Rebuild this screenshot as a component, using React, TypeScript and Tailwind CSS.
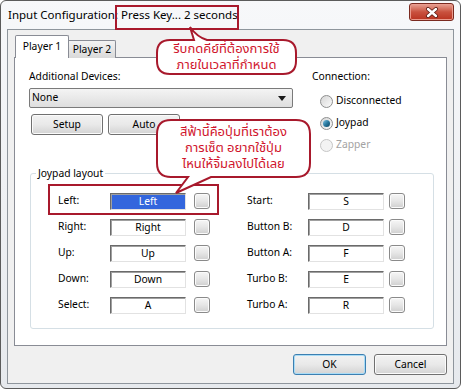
import React from 'react';

const ui = { fontFamily: '"Noto Sans", "Liberation Sans", sans-serif' };
const thai = { fontFamily: 'Tahoma, "Noto Sans Thai", "Noto Sans Thai UI", Loma, Garuda, "DejaVu Sans", sans-serif' };

const rowsLeft = [
  ['Left:', 'Left'],
  ['Right:', 'Right'],
  ['Up:', 'Up'],
  ['Down:', 'Down'],
  ['Select:', 'A'],
];
const rowsRight = [
  ['Start:', 'S'],
  ['Button B:', 'D'],
  ['Button A:', 'F'],
  ['Turbo B:', 'E'],
  ['Turbo A:', 'R'],
];

const SmallButton = () => (
  <div className="w-[16px] h-[16px] rounded-[3px] border border-[#8a8a8a] bg-gradient-to-b from-[#f6f6f6] via-[#e6e6e6] to-[#cfcfcf] shadow-[inset_0_0_0_1px_#fbfbfb]" />
);

const KeyBox = ({ value, active }: { value: string; active?: boolean }) => (
  <div
    className={`w-[76px] h-[17px] flex items-center justify-center border-t border-l border-t-[#6a6a6a] border-l-[#6a6a6a] border-r border-b border-r-[#e2e2e2] border-b-[#e2e2e2] shadow-[inset_1px_1px_0_#a0a0a0] leading-none ${
      active ? 'bg-[#3366dd] text-white' : 'bg-white text-black'
    }`}
  >
    {value}
  </div>
);

const WinButton = ({ label, w, primary }: { label: string; w: string; primary?: boolean }) => (
  <div
    className={`${w} h-[21px] flex items-center justify-center rounded-[3px] border bg-gradient-to-b from-[#f2f2f2] via-[#e9e9e9] to-[#d3d3d3] ${
      primary
        ? 'border-[#3c7fb1] shadow-[inset_0_0_0_1px_#a9dcf6]'
        : 'border-[#707070] shadow-[inset_0_0_0_1px_#fbfbfb]'
    }`}
  >
    {label}
  </div>
);

const Radio = ({ label, checked, disabled }: { label: string; checked?: boolean; disabled?: boolean }) => (
  <div className="h-[22px] flex items-center pl-[8px] gap-[3px]">
    <div
      className={`w-[13px] h-[13px] rounded-full border flex items-center justify-center ${
        disabled
          ? 'border-[#c6c6c6] bg-[#f3f3f3]'
          : 'border-[#8e8f8f] bg-gradient-to-br from-[#d6d6d6] to-[#fbfbfb]'
      }`}
    >
      {checked && <div className="w-[7px] h-[7px] rounded-full bg-gradient-to-br from-[#7cc4e4] via-[#2a7aa0] to-[#0f4763]" />}
    </div>
    <span className={disabled ? 'text-[#a3a3a3]' : 'text-black'}>{label}</span>
  </div>
);

export default function App() {
  return (
    <div className="relative w-[462px] h-[391px] bg-white overflow-hidden text-[10.3px] text-black" style={ui}>
      {/* Window */}
      <div className="w-[461px] h-[389px] border border-[#5b5b5b] rounded-[6px] bg-gradient-to-b from-[#f7f8fa] to-[#e6e9ed] flex flex-col">
        {/* Title bar */}
        <div className="h-[28px] flex items-center pl-[7px] pr-[6px]">
          <span className="text-[11.5px]">Input Configuration: Press Key... 2 seconds</span>
          <div className="ml-auto self-start mt-[2px] w-[45px] h-[18px] rounded-[3px] border border-[#7a2a20] bg-gradient-to-b from-[#e7a295] via-[#c9513e] to-[#b9321f] shadow-[inset_0_0_0_1px_#eb9c8e] flex items-center justify-center">
            <svg width="14" height="11" viewBox="0 0 14 11">
              <path d="M3 2 L11 9 M11 2 L3 9" stroke="#5a1a12" strokeWidth="4" strokeLinecap="round" />
              <path d="M3 2 L11 9 M11 2 L3 9" stroke="#ffffff" strokeWidth="2.4" strokeLinecap="round" />
            </svg>
          </div>
        </div>

        {/* Client area */}
        <div className="mx-[6px] h-[355px] border border-[#8e959c] bg-[#f0f0f0] px-[6px] pt-[5px] flex flex-col">
          {/* Tabs */}
          <div className="h-[23px] -mb-[1px] pl-[1px] flex items-end relative z-10">
            <div className="w-[54px] h-[23px] border border-b-0 border-[#898c95] rounded-t-[2px] bg-white flex items-center justify-center pb-[1px]">
              Player 1
            </div>
            <div className="w-[47px] h-[18px] border border-l-0 border-b-0 border-[#898c95] rounded-tr-[2px] bg-gradient-to-b from-[#f3f3f3] to-[#d9d9d9] flex items-center justify-center">
              Player 2
            </div>
          </div>

          {/* Tab panel */}
          <div className="h-[289px] border border-[#898c95] bg-white flex flex-col">
            <div className="flex items-start pt-[12px] pl-[14px]">
              <div className="w-[264px] flex flex-col">
                <div className="h-[14px] flex items-center">Additional Devices:</div>
                <div className="mt-[4px] h-[20px] rounded-[2px] border border-[#7a7a7a] bg-gradient-to-b from-[#f4f4f4] to-[#dedede] flex items-center pl-[2px] pr-[6px]">
                  <span>None</span>
                  <svg className="ml-auto" width="8" height="5" viewBox="0 0 8 5">
                    <path d="M0 0 L8 0 L4 5 Z" fill="#1a1a1a" />
                  </svg>
                </div>
                <div className="mt-[6px] pl-[2px] flex gap-[5px]">
                  <WinButton label="Setup" w="w-[72px]" />
                  <WinButton label="Auto" w="w-[72px]" />
                </div>
              </div>
              <div className="ml-[19px] flex flex-col">
                <div className="h-[14px] flex items-center">Connection:</div>
                <div className="mt-[6px] flex flex-col">
                  <Radio label="Disconnected" />
                  <Radio label="Joypad" checked />
                  <Radio label="Zapper" disabled />
                </div>
              </div>
            </div>

            {/* Joypad layout group */}
            <div className="relative mt-[17px] ml-[15px] w-[404px] h-[156px] border border-[#d5dfe5] rounded-[3px] pt-[14px] pl-[27px]">
              <span className="absolute -top-[9px] left-[5px] px-[2px] bg-white leading-[16px]">Joypad layout</span>
              <div className="flex">
                <div className="flex flex-col">
                  {rowsLeft.map(([label, value], i) => (
                    <div key={label} className="h-[26px] flex items-center">
                      <span className="w-[52px]">{label}</span>
                      <KeyBox value={value} active={i === 0} />
                      <div className="ml-[8px]">
                        <SmallButton />
                      </div>
                    </div>
                  ))}
                </div>
                <div className="ml-[37px] flex flex-col">
                  {rowsRight.map(([label, value]) => (
                    <div key={label} className="h-[26px] flex items-center">
                      <span className="w-[61px]">{label}</span>
                      <KeyBox value={value} />
                      <div className="ml-[5px]">
                        <SmallButton />
                      </div>
                    </div>
                  ))}
                </div>
              </div>
            </div>
          </div>

          {/* Dialog buttons */}
          <div className="mt-[8px] flex justify-end gap-[8px]">
            <WinButton label="OK" w="w-[73px]" primary />
            <WinButton label="Cancel" w="w-[73px]" />
          </div>
        </div>
      </div>

      {/* Annotations */}
      <svg className="absolute inset-0 pointer-events-none" width="462" height="391" viewBox="0 0 462 391">
        <rect x="116" y="6" width="122" height="23" fill="none" stroke="#a8192c" strokeWidth="2" />
        <rect x="49" y="185" width="169" height="29" fill="none" stroke="#a8192c" strokeWidth="2" />
        <path
          d="M170 40 L194 40 L190 27 Q197 37 207 40 L283 40 Q296 40 296 53 L296 61 Q296 74 283 74 L170 74 Q157 74 157 61 L157 53 Q157 40 170 40 Z"
          fill="#ffffff"
          stroke="#a8192c"
          strokeWidth="2"
        />
        <path
          d="M171 120 L296 120 Q310 120 310 134 L310 163 Q310 177 296 177 L211 177 L176 193 L188 177 L171 177 Q157 177 157 163 L157 134 Q157 120 171 120 Z"
          fill="#ffffff"
          stroke="#a8192c"
          strokeWidth="2"
        />
      </svg>
      <div className="absolute left-[157px] top-[41px] w-[139px] flex flex-col items-center text-[13px] leading-[16px] text-[#d0142c]" style={thai}>
        <span>รีบกดคีย์ที่ต้องการใช้</span>
        <span>ภายในเวลาที่กำหนด</span>
      </div>
      <div className="absolute left-[157px] top-[124px] w-[153px] flex flex-col items-center text-[13px] leading-[16px] text-[#d0142c]" style={thai}>
        <span>สีฟ้านี้คือปุ่มที่เราต้อง</span>
        <span>การเซ็ต อยากใช้ปุ่ม</span>
        <span>ไหนให้จิ้มลงไปได้เลย</span>
      </div>
    </div>
  );
}
